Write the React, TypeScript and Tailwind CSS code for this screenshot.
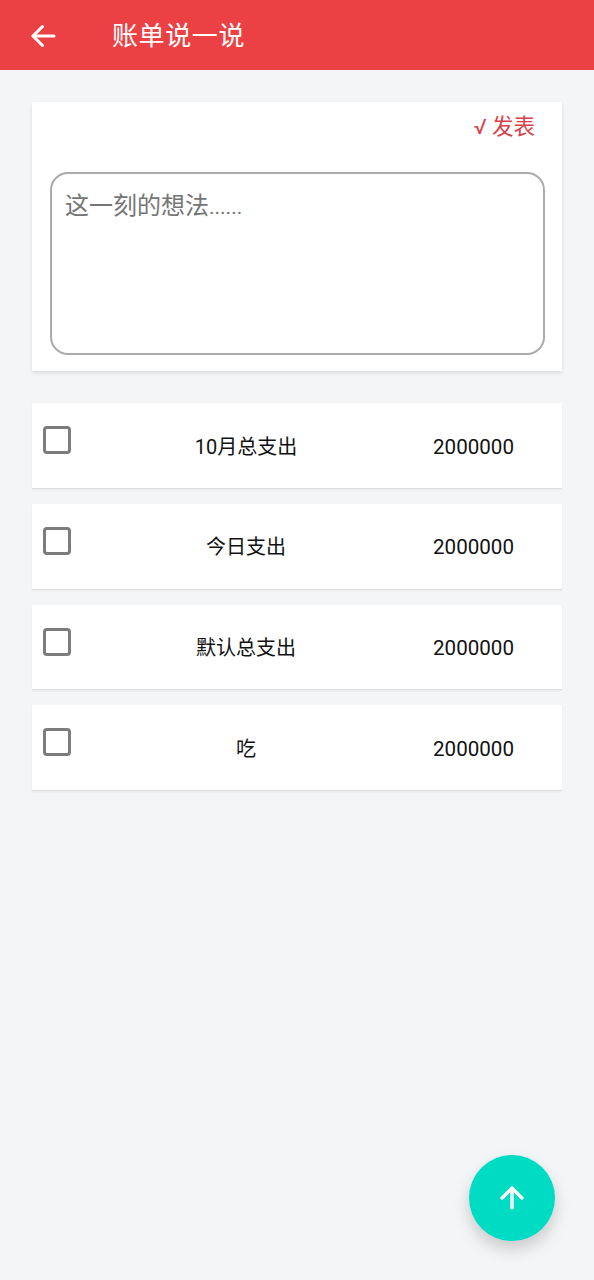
import { ArrowUp } from "lucide-react";

const rows = ["10月总支出", "今日支出", "默认总支出", "吃"];

function BackArrow() {
    return (
        <svg width="28" height="28" viewBox="0 0 28 28" fill="none" stroke="white" strokeWidth="3" strokeLinecap="round" strokeLinejoin="round">
            <path d="M4 14H25" />
            <path d="M13.5 4.5L4 14L13.5 23.5" />
        </svg>
    );
}

function BillRow({ label }: { label: string }) {
    return (
        <div className="flex h-[85.67px] bg-white border-b border-[#dcdee0] shadow-[0_1px_2px_rgba(0,0,0,0.05)]">
            <div className="w-[106px] pl-[11px] pt-[23px] shrink-0">
                <div className="w-[28px] h-[28px] rounded-[4px] border-[3px] border-[#7c7c7c] bg-white" />
            </div>
            <div className="w-[216px] shrink-0 flex items-center justify-center pt-[2px] text-[20px] text-[#111]">{label}</div>
            <div className="flex-1 flex items-center pl-[79px] pt-[3px] text-[20.6px] text-[#111]">2000000</div>
        </div>
    );
}

export default function App() {
    return (
        <div className="relative w-[594px] h-[1280px] bg-[#f3f5f7] overflow-hidden font-['Roboto','Noto_Sans_CJK_SC',sans-serif]">
            <header className="h-[70px] bg-[#ec4144] flex items-center text-white">
                <div className="w-[112px] pl-[29px] pt-[2px] shrink-0">
                    <BackArrow />
                </div>
                <h1 className="pt-[3px] text-[26px] font-normal tracking-[0.6px]">账单说一说</h1>
            </header>

            <main className="px-[32px] pt-[32px]">
                <section className="h-[269.3px] bg-white px-[18px] shadow-[0_2px_4px_rgba(0,0,0,0.1)]">
                    <div className="h-[70px] flex justify-end pt-[9px] pr-[9px] text-[21.5px] leading-[32px] text-[#d8404a]">
                        √ 发表
                    </div>
                    <div className="h-[183px] w-[495px] rounded-[18px] border-2 border-[#ababab] px-[13px] pt-[14px] text-[24px] leading-[36px] text-[#757575]">
                        这一刻的想法<span className="text-[21px]">......</span>
                    </div>
                </section>

                <div className="mt-[32px] flex flex-col gap-[15px]">
                    {rows.map((r) => (
                        <BillRow key={r} label={r} />
                    ))}
                </div>
            </main>

            <button className="absolute left-[469px] top-[1155px] w-[86px] h-[86px] rounded-full bg-[#00dcc4] flex items-center justify-center shadow-[0_8px_16px_rgba(0,0,0,0.18)]">
                <ArrowUp size={34} color="white" strokeWidth={2.4} />
            </button>
        </div>
    );
}
